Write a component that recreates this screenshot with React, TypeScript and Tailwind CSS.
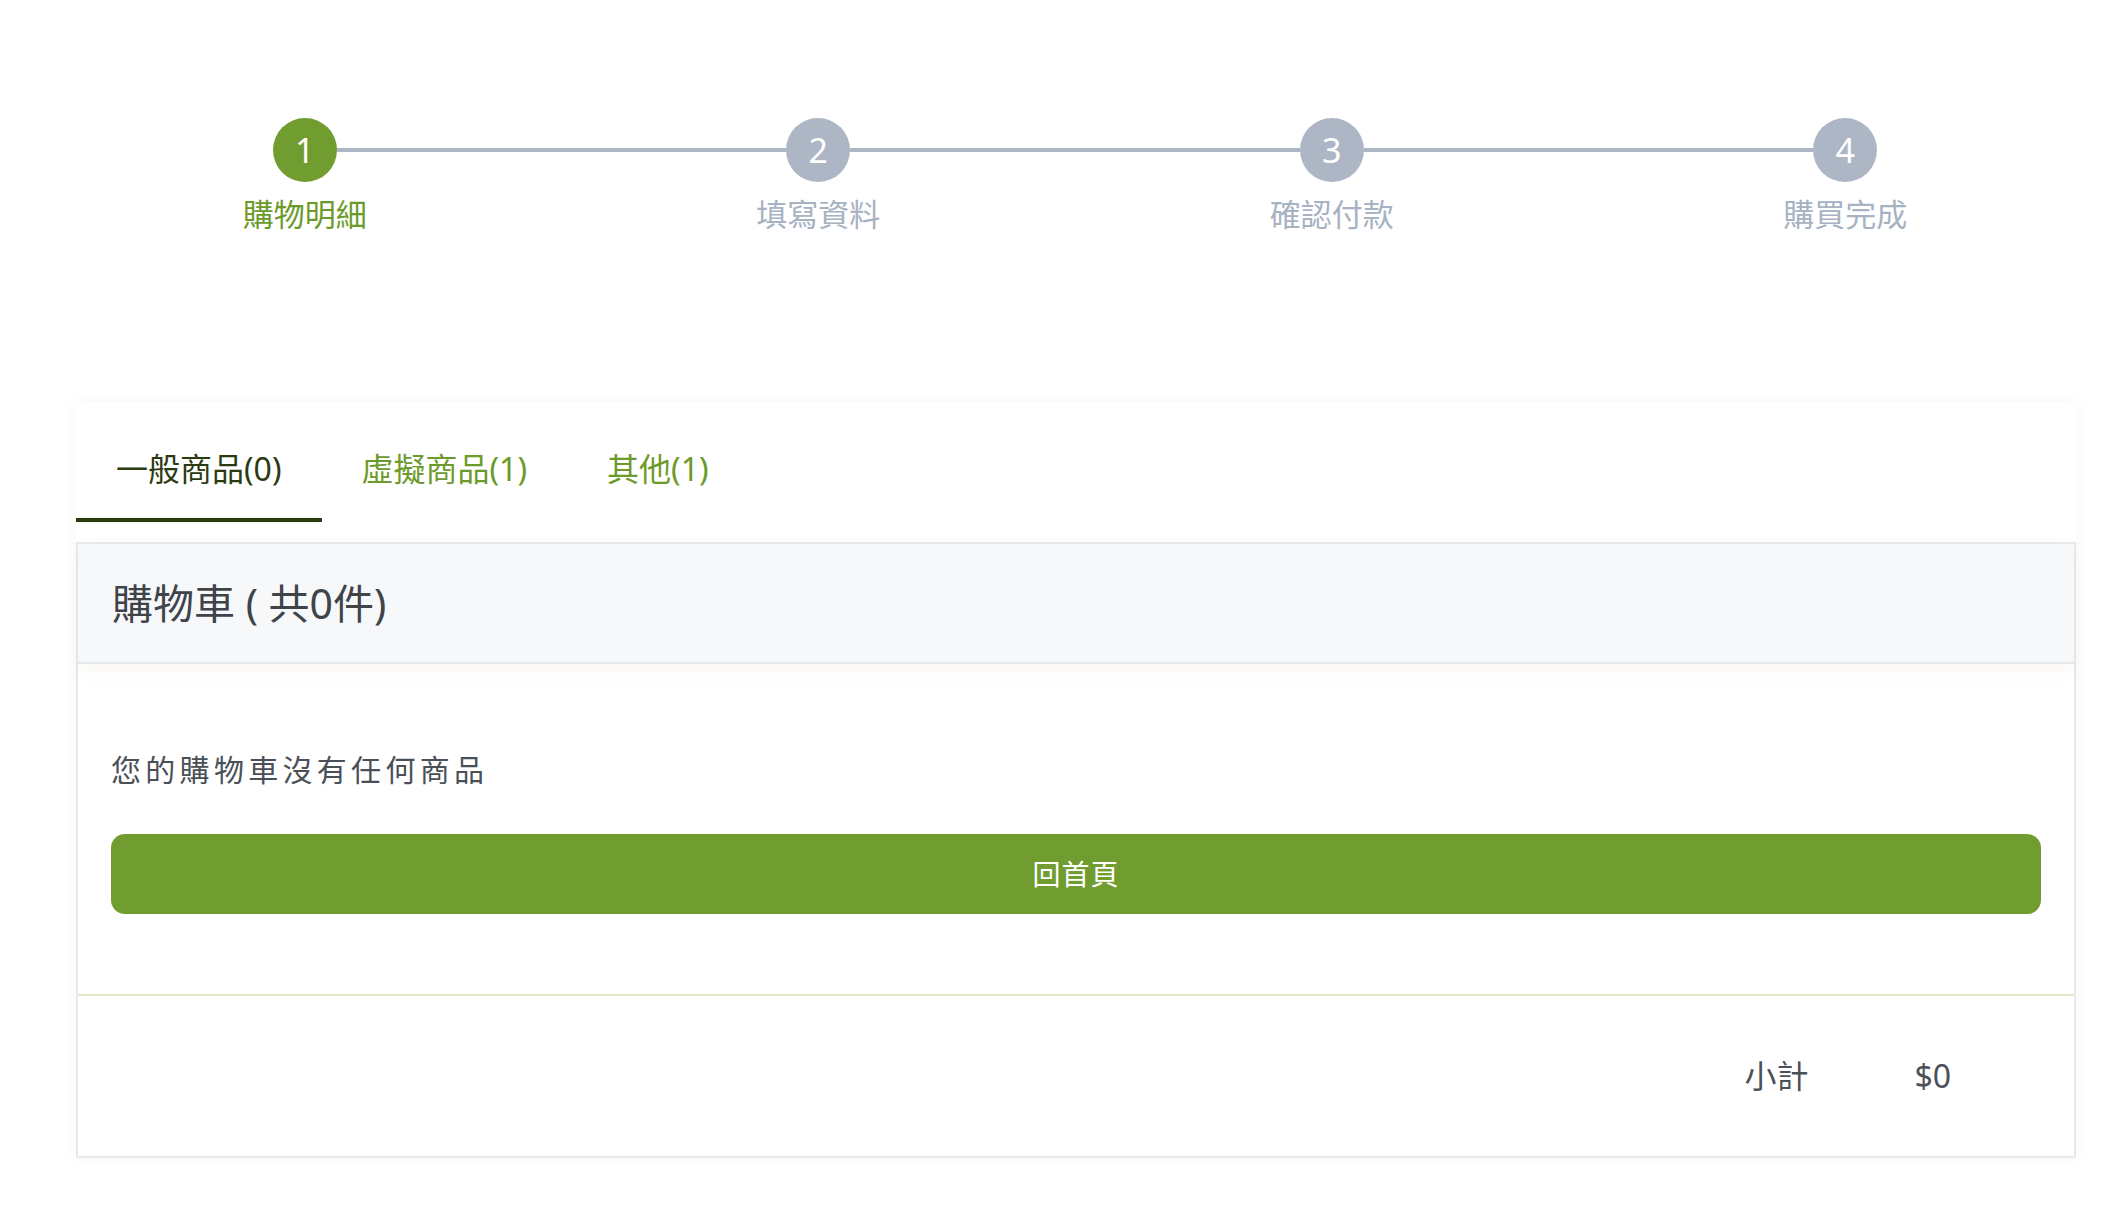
const steps = ["購物明細", "填寫資料", "確認付款", "購買完成"];

const tabs = [
  { label: "一般商品(0)", active: true },
  { label: "虛擬商品(1)", active: false },
  { label: "其他(1)", active: false },
];

function Stepper() {
  return (
    <div className="grid grid-cols-4 w-[2054px] ml-[48px] pt-[118px]">
      {steps.map((s, i) => (
        <div key={s} className="flex flex-col items-center">
          <div className="flex items-center w-full">
            <div className={`h-1 flex-1 ${i === 0 ? "bg-transparent" : "bg-[#adb6c5]"}`} />
            <div
              className={`w-16 h-16 rounded-full flex items-center justify-center text-white text-[34px] leading-none ${
                i === 0 ? "bg-[#719c2f]" : "bg-[#adb6c5]"
              }`}
            >
              {i + 1}
            </div>
            <div className={`h-1 flex-1 ${i === 3 ? "bg-transparent" : "bg-[#adb6c5]"}`} />
          </div>
          <div
            className={`mt-[10px] text-[31px] leading-[45px] ${
              i === 0 ? "text-[#6c9a2b]" : "text-[#a7b2c2]"
            }`}
          >
            {s}
          </div>
        </div>
      ))}
    </div>
  );
}

export default function App() {
  return (
    <div
      className="min-h-screen bg-white pb-20"
      style={{ fontFamily: '"Noto Sans", "Noto Sans CJK TC", sans-serif' }}
    >
      <Stepper />

      <div className="ml-[76px] w-[2000px] mt-[165px] bg-white shadow-[0_0_12px_rgba(120,110,60,0.06)]">
        {/* tabs */}
        <div className="flex">
          {tabs.map((t) => (
            <button
              key={t.label}
              className={`px-10 pt-[43px] pb-[25px] text-[32px] leading-[48px] border-b-4 ${
                t.active
                  ? "border-[#2b3a0d] text-[#2b3a12]"
                  : "border-transparent text-[#6c9a2b]"
              }`}
            >
              {t.label}
            </button>
          ))}
        </div>

        <div className="mt-5 border-2 border-[#e8e9ee]">
          <div className="bg-[#f7f8fa] px-[34px] h-[120px] flex items-center border-b-2 border-[#e8e9ee] shadow-[0_8px_16px_rgba(190,170,130,0.08)] relative">
            <h2 className="text-[41px] leading-none text-[#3f434a]">購物車 ( 共0件)</h2>
          </div>

          <div className="px-[33px] pt-[83px] pb-[80px] border-b-2 border-[#dfe9cb]">
            <p className="text-[30px] leading-[45px] tracking-[4.3px] text-[#4b5058]">
              您的購物車沒有任何商品
            </p>
            <button className="mt-[42px] w-full h-20 rounded-[14px] bg-[#719c2f] text-white text-[28px] tracking-[1px]">
              回首頁
            </button>
          </div>

          <div className="h-[160px] flex items-center justify-end pr-[123px] text-[32px] text-[#4b5058]">
            <span>小計</span>
            <span className="ml-[106px]">$0</span>
          </div>
        </div>
      </div>
    </div>
  );
}
